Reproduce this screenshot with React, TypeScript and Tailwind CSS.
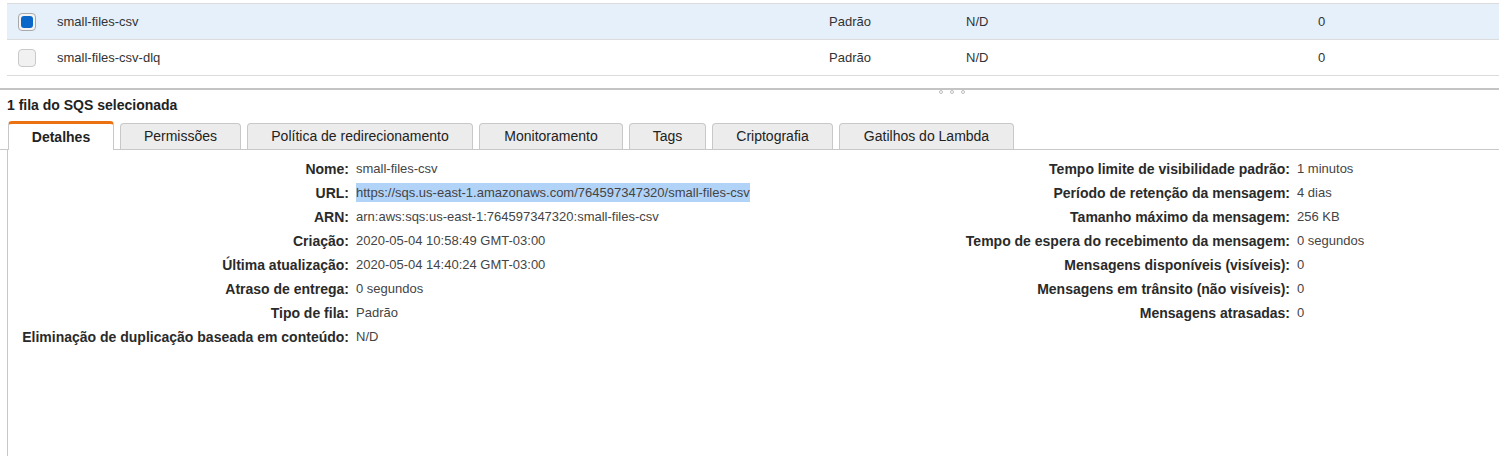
import React from "react";

const queues = [
  { name: "small-files-csv", type: "Padrão", dedup: "N/D", count: "0", checked: true },
  { name: "small-files-csv-dlq", type: "Padrão", dedup: "N/D", count: "0", checked: false },
];

const tabs = [
  { label: "Detalhes", w: "w-[106px]", active: true },
  { label: "Permissões", w: "w-[121px]" },
  { label: "Política de redirecionamento", w: "w-[226px]" },
  { label: "Monitoramento", w: "w-[144px]" },
  { label: "Tags", w: "w-[77px]" },
  { label: "Criptografia", w: "w-[121px]" },
  { label: "Gatilhos do Lambda", w: "w-[175px]" },
];

const leftDetails: [string, string, boolean?][] = [
  ["Nome:", "small-files-csv"],
  ["URL:", "https://sqs.us-east-1.amazonaws.com/764597347320/small-files-csv", true],
  ["ARN:", "arn:aws:sqs:us-east-1:764597347320:small-files-csv"],
  ["Criação:", "2020-05-04 10:58:49 GMT-03:00"],
  ["Última atualização:", "2020-05-04 14:40:24 GMT-03:00"],
  ["Atraso de entrega:", "0 segundos"],
  ["Tipo de fila:", "Padrão"],
  ["Eliminação de duplicação baseada em conteúdo:", "N/D"],
];

const rightDetails: [string, string][] = [
  ["Tempo limite de visibilidade padrão:", "1 minutos"],
  ["Período de retenção da mensagem:", "4 dias"],
  ["Tamanho máximo da mensagem:", "256 KB"],
  ["Tempo de espera do recebimento da mensagem:", "0 segundos"],
  ["Mensagens disponíveis (visíveis):", "0"],
  ["Mensagens em trânsito (não visíveis):", "0"],
  ["Mensagens atrasadas:", "0"],
];

function Checkbox({ checked }: { checked: boolean }) {
  if (checked) {
    return (
      <div className="w-[18px] h-[18px] rounded-[4px] border border-[#a9a9a9] bg-[#f4f4f4] flex items-center justify-center">
        <div className="w-[12px] h-[12px] rounded-[3px] bg-[#0b66c9]"></div>
      </div>
    );
  }
  return <div className="w-[18px] h-[18px] rounded-[4px] border border-[#c9c9c9] bg-[#f1f1f1]"></div>;
}

function DetailRow({ label, value, labelW, highlight }: { label: string; value: string; labelW: string; highlight?: boolean }) {
  return (
    <div className="flex items-center h-[24px]">
      <div className={`${labelW} text-right font-bold text-[14px] text-[#2a2a2a] shrink-0 whitespace-nowrap`}>{label}</div>
      <div className="ml-[7px] text-[#444] whitespace-nowrap">
        <span className={highlight ? "bg-[#b2d3f8] py-[2px]" : ""}>{value}</span>
      </div>
    </div>
  );
}

export default function App() {
  return (
    <div className="w-[1499px] h-[456px] overflow-hidden bg-white text-[13px] text-[#333]" style={{ fontFamily: '"Liberation Sans", Arial, sans-serif' }}>
      <div className="pl-[7px] pt-[3px]">
        <div className="border-t border-[#dcdcdc]">
          {queues.map((q) => (
            <div
              key={q.name}
              className={`grid grid-cols-[50px_772px_137px_352px_1fr] items-center h-[36px] border-b border-[#dcdcdc] ${q.checked ? "bg-[#e6f0fb]" : "bg-white"}`}
            >
              <div className="pl-[11px]">
                <Checkbox checked={q.checked} />
              </div>
              <div>{q.name}</div>
              <div>{q.type}</div>
              <div>{q.dedup}</div>
              <div>{q.count}</div>
            </div>
          ))}
        </div>
      </div>

      <div className="mt-[12px] h-[2px] bg-[#c4c4c4]"></div>
      <div className="flex gap-[7px] pl-[939px] h-[5px]">
        <div className="w-[4px] h-[4px] rounded-full border border-[#bdbdbd]"></div>
        <div className="w-[4px] h-[4px] rounded-full border border-[#bdbdbd]"></div>
        <div className="w-[4px] h-[4px] rounded-full border border-[#bdbdbd]"></div>
      </div>

      <div className="mt-[1px] pl-[7px] h-[19px] leading-[19px] font-bold text-[14px] text-[#222]">1 fila do SQS selecionada</div>

      <div className="mt-[7px] flex items-end gap-[6px] pl-[8px] border-b border-[#c8c8c8] h-[28px] text-[14px]">
        {tabs.map((t) =>
          t.active ? (
            <div
              key={t.label}
              className={`${t.w} h-[29px] -mb-px bg-white border-x border-[#c8c8c8] border-t-[3px] border-t-[#ec7211] rounded-t-[4px] flex items-center justify-center font-bold text-[#222]`}
            >
              {t.label}
            </div>
          ) : (
            <div
              key={t.label}
              className={`${t.w} h-[26px] bg-[#ececec] border border-b-0 border-[#c8c8c8] rounded-t-[4px] flex items-center justify-center text-[#222]`}
            >
              {t.label}
            </div>
          )
        )}
      </div>

      <div className="ml-[7px] border-l border-[#c8c8c8] h-[400px] pt-[7px] flex">
        <div className="w-[933px]">
          {leftDetails.map(([l, v, h]) => (
            <DetailRow key={l} label={l} value={v} labelW="w-[341px]" highlight={h} />
          ))}
        </div>
        <div>
          {rightDetails.map(([l, v]) => (
            <DetailRow key={l} label={l} value={v} labelW="w-[349px]" />
          ))}
        </div>
      </div>
    </div>
  );
}
